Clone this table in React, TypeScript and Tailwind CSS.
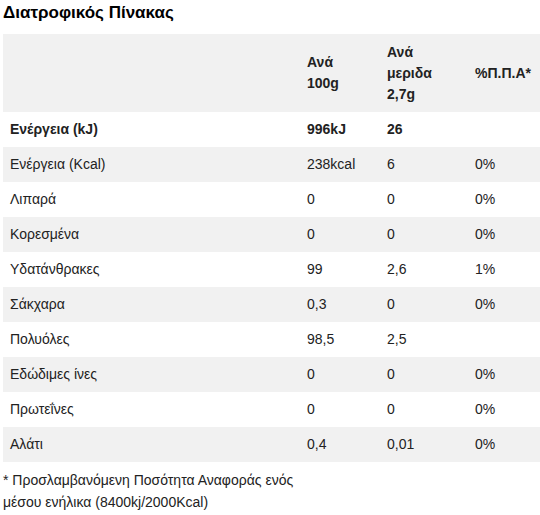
import React from "react";

const rows = [
  { name: "Ενέργεια (kJ)", per100: "996kJ", portion: "26", pct: "", bold: true },
  { name: "Ενέργεια (Kcal)", per100: "238kcal", portion: "6", pct: "0%" },
  { name: "Λιπαρά", per100: "0", portion: "0", pct: "0%" },
  { name: "Κορεσμένα", per100: "0", portion: "0", pct: "0%" },
  { name: "Υδατάνθρακες", per100: "99", portion: "2,6", pct: "1%" },
  { name: "Σάκχαρα", per100: "0,3", portion: "0", pct: "0%" },
  { name: "Πολυόλες", per100: "98,5", portion: "2,5", pct: "" },
  { name: "Εδώδιμες ίνες", per100: "0", portion: "0", pct: "0%" },
  { name: "Πρωτεΐνες", per100: "0", portion: "0", pct: "0%" },
  { name: "Αλάτι", per100: "0,4", portion: "0,01", pct: "0%" },
];

const App = () => {
  return (
    <div className="w-[540px] h-[515px] bg-white px-[3px] font-['Liberation_Sans',Arial,sans-serif] text-[14px] text-[#222]">
      <h2 className="text-[17px] font-bold leading-[26px] text-black h-[34px]">
        Διατροφικός Πίνακας
      </h2>

      <table className="w-[537px] border-collapse table-fixed">
        <colgroup>
          <col className="w-[297px]" />
          <col className="w-[80px]" />
          <col className="w-[88px]" />
          <col />
        </colgroup>
        <thead>
          <tr className="bg-[#f1f1f1] h-[78px] font-bold leading-[21px]">
            <th className="px-[7px]"></th>
            <th className="px-[7px] text-left">
              Ανά
              <br />
              100g
            </th>
            <th className="px-[7px] text-left">
              Ανά
              <br />
              μεριδα
              <br />
              2,7g
            </th>
            <th className="px-[7px] text-left">%Π.Π.Α*</th>
          </tr>
        </thead>
        <tbody>
          {rows.map((r, i) => (
            <tr
              key={r.name}
              className={
                (i % 2 === 1 ? "bg-[#f1f1f1] " : "bg-white ") +
                (r.bold ? "font-bold " : "") +
                "h-[35px] leading-[21px]"
              }
            >
              <td className="px-[7px]">{r.name}</td>
              <td className="px-[7px]">{r.per100}</td>
              <td className="px-[7px]">{r.portion}</td>
              <td className="px-[7px]">{r.pct}</td>
            </tr>
          ))}
        </tbody>
      </table>

      <p className="mt-[7px] leading-[22px] w-[330px]">
        * Προσλαμβανόμενη Ποσότητα Αναφοράς ενός μέσου ενήλικα (8400kj/2000Kcal)
      </p>
    </div>
  );
};

export default App;
